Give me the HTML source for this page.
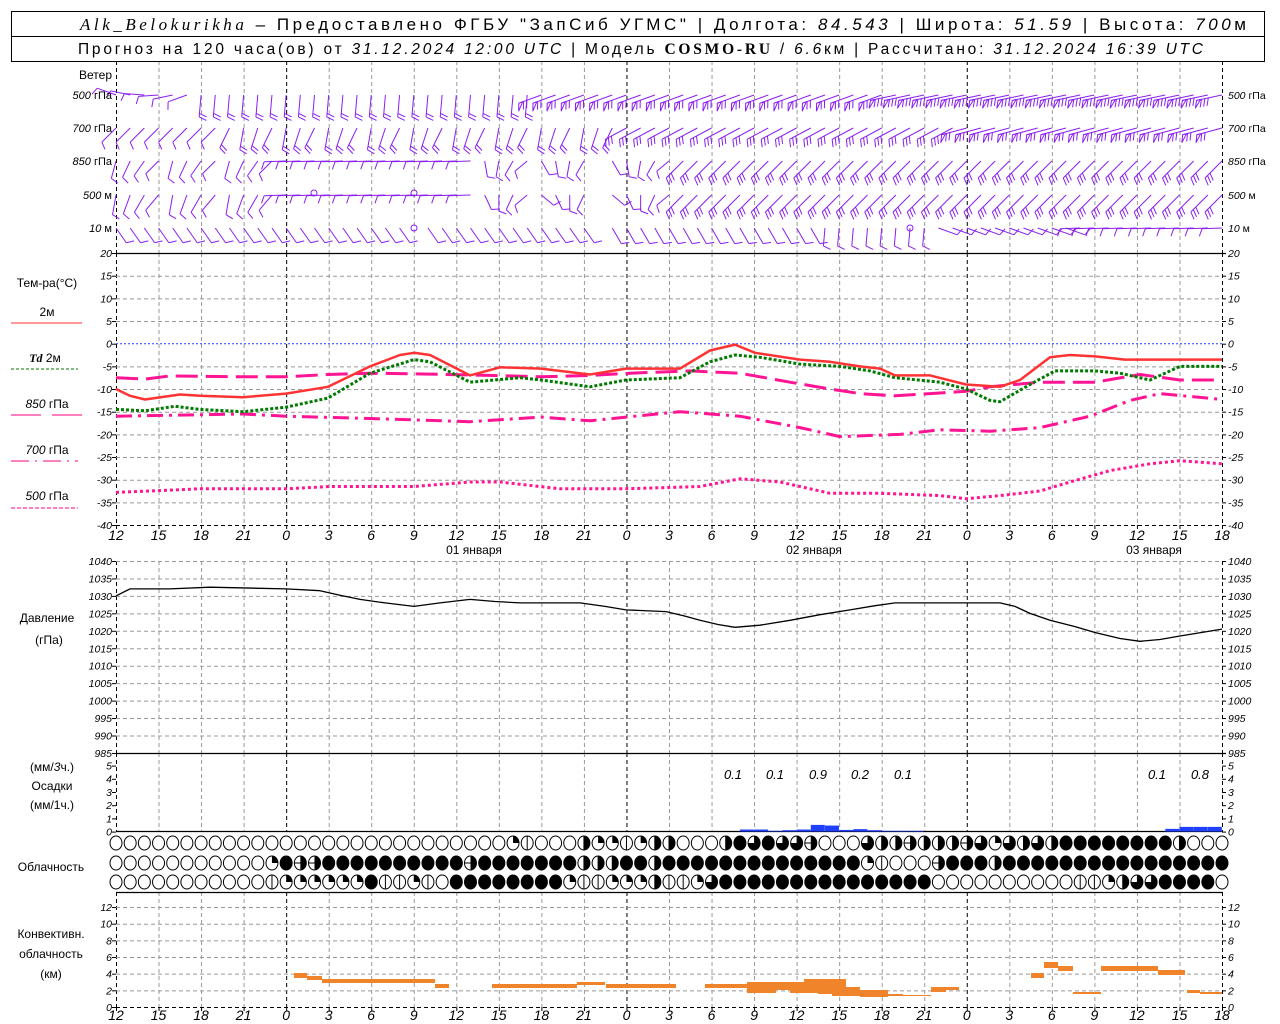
<!DOCTYPE html>
<html><head><meta charset="utf-8">
<style>
html,body{margin:0;padding:0;background:#fff;width:1280px;height:1024px;overflow:hidden}
svg{display:block;font-family:"Liberation Sans",sans-serif}
.t{font-size:14px;font-style:italic;text-anchor:middle}
.yl{font-size:10.5px;font-style:italic;text-anchor:end}
.yr{font-size:10.5px;font-style:italic;text-anchor:start}
.lb{font-size:12px;text-anchor:middle}
.wl{font-size:11px;text-anchor:end}
.pl{font-size:13px;font-style:italic;text-anchor:middle}
</style></head><body>
<svg id="s" width="1280" height="1024" viewBox="0 0 1280 1024" xmlns="http://www.w3.org/2000/svg">
<rect x="0" y="0" width="1280" height="1024" fill="#fff"/>
<g id="grid"></g>
<g id="data"></g>
<rect x="11.5" y="11.5" width="1253" height="50" fill="none" stroke="#000"/>
<line x1="11" y1="36.5" x2="1265" y2="36.5" stroke="#000"/>
<text x="80" y="30" font-size="17" textLength="1166" lengthAdjust="spacing"><tspan font-family="Liberation Serif" font-style="italic">Alk_Belokurikha</tspan> – Предоставлено ФГБУ "ЗапСиб УГМС" | Долгота: <tspan font-style="italic">84.543</tspan> | Широта: <tspan font-style="italic">51.59</tspan> | Высота: <tspan font-style="italic">700</tspan>м</text>
<text x="78" y="54" font-size="15.5" textLength="1125" lengthAdjust="spacing">Прогноз на 120 часа(ов) от <tspan font-style="italic">31.12.2024 12:00 UTC</tspan> | Модель <tspan font-family="Liberation Serif" font-weight="bold">COSMO-RU</tspan> / <tspan font-style="italic">6.6</tspan>км | Рассчитано: <tspan font-style="italic">31.12.2024 16:39 UTC</tspan></text>

<text x="112" y="79" font-size="12" text-anchor="end">Ветер</text>
<text class="wl" x="112" y="99"><tspan font-style="italic">500</tspan> гПа</text>
<text class="wl" x="112" y="132"><tspan font-style="italic">700</tspan> гПа</text>
<text class="wl" x="112" y="165"><tspan font-style="italic">850</tspan> гПа</text>
<text class="wl" x="112" y="199"><tspan font-style="italic">500</tspan>  м</text>
<text class="wl" x="112" y="232"><tspan font-style="italic">10</tspan>    м</text>
<text class="yr" font-size="11" x="1228" y="99"><tspan font-style="italic">500</tspan> <tspan font-style="normal">гПа</tspan></text>
<text class="yr" font-size="11" x="1228" y="132"><tspan font-style="italic">700</tspan> <tspan font-style="normal">гПа</tspan></text>
<text class="yr" font-size="11" x="1228" y="165"><tspan font-style="italic">850</tspan> <tspan font-style="normal">гПа</tspan></text>
<text class="yr" font-size="11" x="1228" y="199"><tspan font-style="italic">500</tspan> <tspan font-style="normal">м</tspan></text>
<text class="yr" font-size="11" x="1228" y="232"><tspan font-style="italic">10</tspan>   <tspan font-style="normal">м</tspan></text>

<text class="lb" x="47" y="287">Тем-ра(°С)</text>
<text class="lb" x="47" y="316" font-size="11">2м</text>
<line x1="11" y1="323" x2="82" y2="323" stroke="#ff3333" stroke-width="1"/>
<text class="lb" x="45" y="362" font-size="11"><tspan font-style="italic" font-family="Liberation Serif" font-weight="bold">Td</tspan>  2м</text>
<line x1="11" y1="369" x2="78" y2="369" stroke="#007a00" stroke-dasharray="3,2"/>
<text class="lb" x="47" y="408" font-size="11"><tspan font-style="italic">850</tspan> гПа</text>
<line x1="11" y1="415" x2="41" y2="415" stroke="#ff0080"/><line x1="52" y1="415" x2="82" y2="415" stroke="#ff0080"/>
<text class="lb" x="47" y="454" font-size="11"><tspan font-style="italic">700</tspan> гПа</text>
<line x1="11" y1="461" x2="78" y2="461" stroke="#ff0080" stroke-dasharray="18,6,2,6"/>
<text class="lb" x="47" y="500" font-size="11"><tspan font-style="italic">500</tspan> гПа</text>
<line x1="11" y1="508" x2="78" y2="508" stroke="#ff0080" stroke-dasharray="4,2"/>

<text class="lb" x="47" y="622">Давление</text>
<text class="lb" x="49" y="644">(гПа)</text>
<text class="lb" x="52" y="771">(мм/<tspan font-style="italic">3</tspan>ч.)</text>
<text class="lb" x="52" y="790">Осадки</text>
<text class="lb" x="52" y="809">(мм/1ч.)</text>
<text class="lb" x="51" y="871">Облачность</text>
<text class="lb" x="51" y="938">Конвективн.</text>
<text class="lb" x="51" y="958">облачность</text>
<text class="lb" x="51" y="978">(км)</text>

<g>
<text class="t" x="116" y="540">12</text><text class="t" x="158.5" y="540">15</text><text class="t" x="201" y="540">18</text><text class="t" x="243.6" y="540">21</text><text class="t" x="286.2" y="540">0</text><text class="t" x="328.7" y="540">3</text><text class="t" x="371.2" y="540">6</text><text class="t" x="413.8" y="540">9</text><text class="t" x="456.3" y="540">12</text><text class="t" x="498.8" y="540">15</text><text class="t" x="541.4" y="540">18</text><text class="t" x="583.9" y="540">21</text><text class="t" x="626.5" y="540">0</text><text class="t" x="669" y="540">3</text><text class="t" x="711.5" y="540">6</text><text class="t" x="754.1" y="540">9</text><text class="t" x="796.6" y="540">12</text><text class="t" x="839.2" y="540">15</text><text class="t" x="881.7" y="540">18</text><text class="t" x="924.2" y="540">21</text><text class="t" x="966.8" y="540">0</text><text class="t" x="1009.3" y="540">3</text><text class="t" x="1051.8" y="540">6</text><text class="t" x="1094.4" y="540">9</text><text class="t" x="1136.9" y="540">12</text><text class="t" x="1179.5" y="540">15</text><text class="t" x="1222" y="540">18</text>
<text class="t" x="116" y="1020">12</text><text class="t" x="158.5" y="1020">15</text><text class="t" x="201" y="1020">18</text><text class="t" x="243.6" y="1020">21</text><text class="t" x="286.2" y="1020">0</text><text class="t" x="328.7" y="1020">3</text><text class="t" x="371.2" y="1020">6</text><text class="t" x="413.8" y="1020">9</text><text class="t" x="456.3" y="1020">12</text><text class="t" x="498.8" y="1020">15</text><text class="t" x="541.4" y="1020">18</text><text class="t" x="583.9" y="1020">21</text><text class="t" x="626.5" y="1020">0</text><text class="t" x="669" y="1020">3</text><text class="t" x="711.5" y="1020">6</text><text class="t" x="754.1" y="1020">9</text><text class="t" x="796.6" y="1020">12</text><text class="t" x="839.2" y="1020">15</text><text class="t" x="881.7" y="1020">18</text><text class="t" x="924.2" y="1020">21</text><text class="t" x="966.8" y="1020">0</text><text class="t" x="1009.3" y="1020">3</text><text class="t" x="1051.8" y="1020">6</text><text class="t" x="1094.4" y="1020">9</text><text class="t" x="1136.9" y="1020">12</text><text class="t" x="1179.5" y="1020">15</text><text class="t" x="1222" y="1020">18</text>
</g>
<text x="474" y="554" font-size="12" text-anchor="middle">01 января</text>
<text x="814" y="554" font-size="12" text-anchor="middle">02 января</text>
<text x="1154" y="554" font-size="12" text-anchor="middle">03 января</text>

<text class="yl" x="112" y="257">20</text><text class="yl" x="112" y="279.7">15</text><text class="yl" x="112" y="302.4">10</text><text class="yl" x="112" y="325">5</text><text class="yl" x="112" y="347.7">0</text><text class="yl" x="112" y="370.4">-5</text><text class="yl" x="112" y="393">-10</text><text class="yl" x="112" y="415.7">-15</text><text class="yl" x="112" y="438.4">-20</text><text class="yl" x="112" y="461">-25</text><text class="yl" x="112" y="483.7">-30</text><text class="yl" x="112" y="506.4">-35</text><text class="yl" x="112" y="529">-40</text>
<text class="yr" x="1228" y="257">20</text><text class="yr" x="1228" y="279.7">15</text><text class="yr" x="1228" y="302.4">10</text><text class="yr" x="1228" y="325">5</text><text class="yr" x="1228" y="347.7">0</text><text class="yr" x="1228" y="370.4">-5</text><text class="yr" x="1228" y="393">-10</text><text class="yr" x="1228" y="415.7">-15</text><text class="yr" x="1228" y="438.4">-20</text><text class="yr" x="1228" y="461">-25</text><text class="yr" x="1228" y="483.7">-30</text><text class="yr" x="1228" y="506.4">-35</text><text class="yr" x="1228" y="529">-40</text>
<text class="yl" x="112" y="565">1040</text><text class="yl" x="112" y="582.5">1035</text><text class="yl" x="112" y="600">1030</text><text class="yl" x="112" y="617.4">1025</text><text class="yl" x="112" y="634.8">1020</text><text class="yl" x="112" y="652.3">1015</text><text class="yl" x="112" y="669.7">1010</text><text class="yl" x="112" y="687.2">1005</text><text class="yl" x="112" y="704.6">1000</text><text class="yl" x="112" y="722.1">995</text><text class="yl" x="112" y="739.5">990</text><text class="yl" x="112" y="757">985</text>
<text class="yr" x="1228" y="565">1040</text><text class="yr" x="1228" y="582.5">1035</text><text class="yr" x="1228" y="600">1030</text><text class="yr" x="1228" y="617.4">1025</text><text class="yr" x="1228" y="634.8">1020</text><text class="yr" x="1228" y="652.3">1015</text><text class="yr" x="1228" y="669.7">1010</text><text class="yr" x="1228" y="687.2">1005</text><text class="yr" x="1228" y="704.6">1000</text><text class="yr" x="1228" y="722.1">995</text><text class="yr" x="1228" y="739.5">990</text><text class="yr" x="1228" y="757">985</text>
<text class="yl" x="112" y="769.5">5</text><text class="yl" x="112" y="782.7">4</text><text class="yl" x="112" y="796">3</text><text class="yl" x="112" y="809.2">2</text><text class="yl" x="112" y="822.4">1</text><text class="yl" x="112" y="835.6">0</text>
<text class="yr" x="1228" y="769.5">5</text><text class="yr" x="1228" y="782.7">4</text><text class="yr" x="1228" y="796">3</text><text class="yr" x="1228" y="809.2">2</text><text class="yr" x="1228" y="822.4">1</text><text class="yr" x="1228" y="835.6">0</text>
<text class="pl" x="733" y="779">0.1</text><text class="pl" x="775" y="779">0.1</text><text class="pl" x="818" y="779">0.9</text><text class="pl" x="860" y="779">0.2</text><text class="pl" x="903" y="779">0.1</text><text class="pl" x="1157" y="779">0.1</text><text class="pl" x="1200" y="779">0.8</text>
<text class="yl" x="112" y="911">12</text><text class="yl" x="112" y="927.7">10</text><text class="yl" x="112" y="944.3">8</text><text class="yl" x="112" y="961">6</text><text class="yl" x="112" y="977.7">4</text><text class="yl" x="112" y="994.3">2</text><text class="yl" x="112" y="1011">0</text>
<text class="yr" x="1228" y="911">12</text><text class="yr" x="1228" y="927.7">10</text><text class="yr" x="1228" y="944.3">8</text><text class="yr" x="1228" y="961">6</text><text class="yr" x="1228" y="977.7">4</text><text class="yr" x="1228" y="994.3">2</text><text class="yr" x="1228" y="1011">0</text>
</svg>
<script>
(function(){
var NS="http://www.w3.org/2000/svg";
var G=document.getElementById("grid"),D=document.getElementById("data");
function el(p,t,a){var e=document.createElementNS(NS,t);for(var k in a)e.setAttribute(k,a[k]);p.appendChild(e);return e;}
function X(h){return 116+h*14.1795;}
function line(p,x1,y1,x2,y2,c,w,da){var a={x1:x1,y1:y1,x2:x2,y2:y2,stroke:c,"stroke-width":w||1};if(da)a["stroke-dasharray"]=da;return el(p,"line",a);}
var panels=[[61,253],[253,525],[561,753],[753,832],[892,1007]];
for(var h=0;h<=78;h+=3){
  var x=X(h)+0.5, day=(h%24==12);
  panels.forEach(function(p){
    if(h==0||h==78||day) line(G,x,p[0],x,p[1],"#000",1,"4,3");
    else line(G,x,p[0],x,p[1],"#999",1,"4,3");
  });
}
function hg(y){line(G,116,y+0.5,1222,y+0.5,"#999",1,"4,3");}
for(var T=15;T>=-35;T-=5){if(T!=0)hg(343.7-4.533*T);}
for(var p=1040;p>990;p-=5)hg(561+3.49*(1040-p));
hg(735.5);
for(var k=2;k<=12;k+=2)hg(1007-8.33*k);
function ticks(vals){vals.forEach(function(y){line(G,112,y+0.5,116,y+0.5,"#000");line(G,1222,y+0.5,1226,y+0.5,"#000");});}
var tv=[];for(T=20;T>=-40;T-=5)tv.push(343.7-4.533*T);ticks(tv);
tv=[];for(p=1040;p>=985;p-=5)tv.push(561+3.49*(1040-p));ticks(tv);
tv=[];for(k=0;k<=5;k++)tv.push(831.6-13.2*k);ticks(tv);
tv=[];for(k=0;k<=12;k+=2)tv.push(1007-8.33*k);ticks(tv);
for(h=0;h<=78;h+=3){line(G,X(h)+.5,525,X(h)+.5,529,"#000");line(G,X(h)+.5,1007,X(h)+.5,1011,"#000");}
line(G,116,253.5,1226,253.5,"#000",1.2);
line(G,116,525.5,1222,525.5,"#000",1,"4,3");
line(G,116,753.5,1226,753.5,"#000",1.2);
line(G,116,831.5,1222,831.5,"#000",1.2);
line(G,116,892.5,1222,892.5,"#000",1.2);
line(G,116,1007.5,1222,1007.5,"#000",1,"4,3");
line(G,116,343.7,1222,343.7,"#2040ff",1,"2,2");

function pts(arr,fy){return arr.map(function(a){return a[0]+","+fy(a[1]).toFixed(1);}).join(" ");}
function ty(T){return 343.7-4.533*T;}
function curve(arr,fy,c,w,da){var a={points:pts(arr,fy),fill:"none",stroke:c,"stroke-width":w,"stroke-linejoin":"round"};if(da)a["stroke-dasharray"]=da;el(D,"polyline",a);}
curve([[116,-32.8],[200,-32],[286,-32],[330,-31.5],[414,-31.5],[470,-30.5],[500,-30.5],[560,-32],[626,-32],[700,-31.5],[740,-29.8],[780,-30.5],[830,-33],[880,-33],[940,-33.5],[966,-34.2],[1000,-33.5],[1040,-32.5],[1070,-30.5],[1110,-28],[1150,-26.5],[1180,-25.8],[1222,-26.5]],ty,"#ff1493",3,"3,3");
curve([[116,-16],[243,-15.5],[286,-16],[370,-16.5],[470,-17.2],[541,-16.2],[590,-17],[680,-15],[740,-16],[800,-18.5],[840,-20.5],[900,-20],[940,-19],[990,-19.3],[1040,-18.5],[1090,-16],[1130,-12.5],[1160,-11],[1222,-12.3]],ty,"#ff1493",3,"16,6,3,6");
curve([[116,-7.5],[145,-7.8],[170,-7.1],[243,-7.3],[286,-7.3],[328,-6.8],[370,-6.5],[430,-6.7],[490,-7],[541,-7.3],[590,-7],[630,-6.5],[690,-6],[740,-6.5],[790,-8.5],[830,-10],[860,-11],[895,-11.5],[930,-11],[966,-10.5],[990,-9.5],[1040,-8.5],[1095,-8.5],[1140,-6.8],[1180,-8],[1222,-8]],ty,"#ff1493",3,"22,8");
curve([[116,-14.5],[145,-14.8],[175,-13.8],[200,-14.5],[243,-15],[286,-14],[328,-12],[370,-6.5],[414,-3.5],[430,-4],[470,-8.5],[520,-7.5],[541,-8],[590,-9.5],[626,-8],[680,-7.5],[710,-4],[735,-2.5],[760,-3],[800,-4.5],[840,-5],[870,-6],[895,-7.5],[940,-8.5],[966,-10],[990,-12.5],[1000,-12.8],[1030,-9],[1055,-6],[1095,-6],[1120,-6.5],[1150,-8],[1180,-5],[1222,-5]],ty,"#007a00",3,"3,2");
curve([[116,-10],[130,-11.5],[145,-12.3],[180,-11.2],[200,-11.5],[243,-11.8],[286,-11],[328,-9.5],[370,-5],[400,-2.5],[414,-2],[430,-2.5],[470,-7],[500,-5.2],[541,-5.5],[590,-6.8],[626,-5.5],[680,-5.5],[710,-1.5],[735,-0.2],[755,-2],[800,-3.5],[830,-4],[860,-5],[880,-5.5],[895,-7],[930,-7],[966,-9],[1000,-9.5],[1020,-8],[1050,-3],[1070,-2.5],[1095,-2.8],[1125,-3.5],[1150,-3.5],[1180,-3.5],[1222,-3.5]],ty,"#ff3333",2.5);
curve([[116,1030],[130,1032],[170,1032],[210,1032.5],[286,1032],[320,1031.5],[340,1030.2],[360,1029],[385,1028],[414,1027],[440,1028],[470,1029],[495,1028.4],[520,1028],[580,1028],[605,1027],[626,1026],[666,1025.5],[685,1024.2],[700,1023],[718,1021.8],[735,1021],[760,1021.6],[790,1023],[820,1024.6],[850,1026],[875,1027.2],[895,1028],[966,1028],[1000,1028],[1015,1027],[1030,1025],[1050,1023],[1075,1021.2],[1095,1019.5],[1120,1017.8],[1140,1017],[1160,1017.5],[1180,1018.5],[1222,1020.5]],function(p){return 561+3.49*(1040-p);},"#000",1.3);

var pr={44:.15,45:.15,46:.05,47:.1,48:.15,49:.5,50:.45,51:.12,52:.18,53:.1,54:.05,55:.05,56:.05,74:.2,75:.35,76:.35,77:.35};
for(var hh in pr){var v=pr[hh];var x0=X(+hh);el(D,"rect",{x:x0,y:831.5-v*13.2,width:14,height:v*13.2,fill:"#2040ff"});}

var cb=[[294,307,973,978],[307,322,976,980],[322,435,979,983],[435,449,984,988],[492,577,984,988],[577,605,982,985],[606,676,984,988],[705,747,984,988],[747,776,982,993],[776,790,982,990],[790,804,982,993],[804,818,979,993],[818,832,979,994],[832,846,979,996],[846,860,987,996],[860,888,990,997],[888,903,994,996],[903,931,995,996],[931,946,987,992],[946,959,987,990],[1031,1044,973,978],[1044,1058,962,968],[1058,1073,966,971],[1073,1101,992,994],[1101,1158,966,971],[1158,1185,970,975],[1187,1200,990,993],[1200,1222,992,994]];
cb.forEach(function(b){el(D,"rect",{x:b[0],y:b[2],width:b[1]-b[0],height:b[3]-b[2],fill:"#f0842a"});});

function row(spec){var a=[];spec.forEach(function(s){for(var i=0;i<s[1];i++)a.push(s[0]);});while(a.length<79)a.push(0);return a.slice(0,79);}
var r1=row([[0,28],[1,1],[6,1],[0,3],[2,1],[1,1],[1,1],[6,1],[1,1],[2,1],[2,1],[0,3],[2,1],[4,1],[3,1],[4,1],[3,1],[3,1],[5,1],[0,3],[3,1],[2,1],[2,1],[5,1],[2,1],[2,1],[2,1],[5,1],[3,1],[1,1],[3,1],[2,1],[3,1],[2,1],[4,8],[2,1],[0,3]]);
var r2=row([[0,11],[1,1],[4,1],[5,2],[4,10],[5,1],[4,7],[2,1],[2,1],[2,1],[4,2],[2,1],[4,14],[1,1],[6,1],[0,3],[5,1],[4,3],[2,1],[4,18]]);
var r3=row([[0,11],[6,1],[1,6],[4,1],[6,2],[1,1],[6,1],[0,1],[4,8],[1,1],[6,2],[1,3],[2,1],[6,2],[1,1],[3,1],[4,15],[0,10],[6,2],[1,1],[2,1],[3,2],[4,4]]);
function circ(cx,cy,t){var rx=6,ry=7;
  if(t==4){el(D,"ellipse",{cx:cx,cy:cy,rx:rx,ry:ry,fill:"#000",stroke:"#000"});return;}
  if(t==1)el(D,"path",{d:"M"+cx+","+cy+"L"+cx+","+(cy-ry)+"A"+rx+","+ry+" 0 0 1 "+(cx+rx)+","+cy+"Z",fill:"#000"});
  if(t==2||t==5)el(D,"path",{d:"M"+cx+","+(cy-ry)+"A"+rx+","+ry+" 0 0 1 "+cx+","+(cy+ry)+"Z",fill:"#000"});
  if(t==3)el(D,"path",{d:"M"+cx+","+cy+"L"+cx+","+(cy-ry)+"A"+rx+","+ry+" 0 1 1 "+(cx-rx)+","+cy+"Z",fill:"#000"});
  el(D,"ellipse",{cx:cx,cy:cy,rx:rx,ry:ry,fill:"none",stroke:"#000","stroke-width":1});
  if(t==6||t==2)line(D,cx,cy-ry,cx,cy+ry,"#000",1);
  if(t==5)line(D,cx-rx,cy,cx+rx,cy,"#000",1);
}
for(var i=0;i<79;i++){var cx=X(i);circ(cx,843,r1[i]);circ(cx,863,r2[i]);circ(cx,882,r3[i]);}

var W="#8a1ef0";
function barb(x,y,ang,len,n,fl){
  var a=ang*Math.PI/180,ex=x+len*Math.cos(a),ey=y+len*Math.sin(a);
  line(D,x,y,ex,ey,W,1);
  var ta=a-1.2,pos=0;
  for(var j=0;j<fl;j++){var bx=ex-pos*Math.cos(a),by=ey-pos*Math.sin(a);
    var b2x=ex-(pos+4)*Math.cos(a),b2y=ey-(pos+4)*Math.sin(a);
    el(D,"polygon",{points:bx+","+by+" "+(bx+8*Math.cos(ta))+","+(by+8*Math.sin(ta))+" "+b2x+","+b2y,fill:"none",stroke:W,"stroke-width":1});pos+=5;}
  for(j=0;j<n;j++){var bx=ex-pos*Math.cos(a),by=ey-pos*Math.sin(a);
    line(D,bx,by,bx+8*Math.cos(ta),by+8*Math.sin(ta),W,1);pos+=3.5;}
}
for(h=0;h<=78;h++){
  var x=X(h);
  if(h<6)barb(x,95,200-h*8,20,1,0);
  else if(h<30)barb(x,95,95,22,2,0);
  else if(h<55)barb(x,95,160,24,2,1);
  else barb(x,95,168,26,3,1);
  if(h<8)barb(x,128,135,20,1,0);
  else if(h<36)barb(x,128,100+(h%3)*8,22,2,0);
  else if(h<60)barb(x,128,152,24,3,0);
  else barb(x,128,165,26,2,1);
  if(h<12)barb(x,161,105+(h%4)*10,18,1,0);
  else if(h<26)barb(x,161,178,22,1,0);
  else if(h<40){if(h!=34)barb(x,161,60+(h%5)*20,16,1,0);}
  else barb(x,161,135,24,3,0);
  if(h<12)barb(x,195,100+(h%4)*10,20,1,0);
  else if(h<26)barb(x,195,178,22,1,0);
  else if(h<40){if(h!=14&&h!=21&&h!=34)barb(x,195,40+(h%5)*25,16,1,0);}
  else barb(x,195,135,24,3,0);
  if(h<34){if(h!=21)barb(x,228,55,18,1,0);}
  else if(h==34){}
  else if(h<50)barb(x,228,60,18,1,0);
  else if(h<58)barb(x,228,95,18,1,0);
  else if(h<68)barb(x,228,20,20,1,0);
  else barb(x,228,178,20,1,0);
}
[[314,193],[414,193],[414,228],[910,228]].forEach(function(c){el(D,"circle",{cx:c[0],cy:c[1],r:3,fill:"none",stroke:W});});
})();
</script>
</body></html>
